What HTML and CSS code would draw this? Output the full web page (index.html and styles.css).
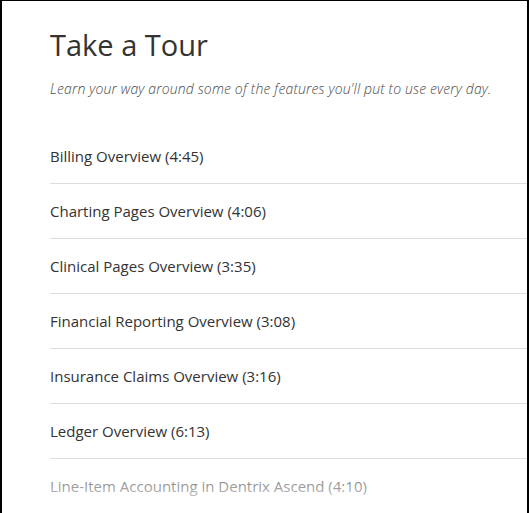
FILE: index.html
```html
<!DOCTYPE html>
<html lang="en">
<head>
    <meta charset="UTF-8">
    <meta name="viewport" content="width=device-width, initial-scale=1.0">
    <title>Take a Tour</title>
    <link rel="stylesheet" href="styles.css">
</head>
<body>
    <div class="tour-panel">
        <h1>Take a Tour</h1>
        <p class="tour-intro">Learn your way around some of the features you'll put to use every day.</p>
        <ul class="tour-list">
            <li>Billing Overview (4:45)</li>
            <li>Charting Pages Overview (4:06)</li>
            <li>Clinical Pages Overview (3:35)</li>
            <li>Financial Reporting Overview (3:08)</li>
            <li>Insurance Claims Overview (3:16)</li>
            <li>Ledger Overview (6:13)</li>
            <li>Line-Item Accounting in Dentrix Ascend (4:10)</li>
        </ul>
        <!-- fade at the bottom of the cropped shot -->
        <div class="tour-fade"></div>
    </div>
</body>
</html>
```
FILE: styles.css
```css
html, body {
    margin: 0;
    padding: 0;
    background: #fff;
}

body {
    font-family: "Open Sans", "Noto Sans", sans-serif;
    color: #333;
}

.tour-panel {
    position: relative;
    height: 513px;
    overflow: hidden;
    box-sizing: border-box;
    border-top: 1px solid #000;
    border-left: 2px solid #000;
    border-right: 2px solid #000;
    padding-left: 48px;
}

.tour-panel h1 {
    margin: 24px 0 0 0;
    font-size: 29px;
    font-weight: 400;
    line-height: 40px;
    color: #333;
}

.tour-intro {
    margin: 14px 0 0 0;
    font-size: 14px;
    font-style: italic;
    font-weight: 300;
    line-height: 20px;
    letter-spacing: 0.15px;
    color: #4a4a4a;
}

.tour-list {
    list-style: none;
    margin: 30px 0 0 0;
    padding: 0;
}

.tour-list li {
    height: 54px;
    line-height: 54px;
    font-size: 15px;
    color: #333;
    border-bottom: 1px solid #ddd;
}

.tour-fade {
    position: absolute;
    left: -2px;
    right: -2px;
    bottom: 0;
    height: 56px;
    background: linear-gradient(to bottom, rgba(255, 255, 255, 0), rgba(255, 255, 255, 0.97));
}
```
